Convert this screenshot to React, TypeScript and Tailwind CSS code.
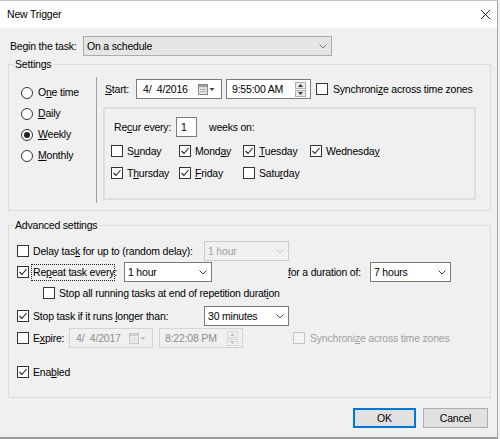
import React from "react";

const FONT = "font-['Liberation_Sans',Arial,sans-serif] text-[10.5px] tracking-[-0.2px] leading-[13px] whitespace-nowrap";

function U({ children }: { children: React.ReactNode }) {
  return <span className="underline underline-offset-[1px] decoration-[1px]">{children}</span>;
}

function Chevron({ color = "#444" }: { color?: string }) {
  return (
    <svg width="8" height="5" viewBox="0 0 8 5" className="shrink-0">
      <polyline points="0.5,0.5 4,4 7.5,0.5" fill="none" stroke={color} strokeWidth="1" />
    </svg>
  );
}

function Checkbox({ checked = false, disabled = false }: { checked?: boolean; disabled?: boolean }) {
  return (
    <span
      className={
        "w-[12px] h-[12px] shrink-0 border flex items-center justify-center " +
        (disabled ? "border-[#c4c4c4] bg-[#f3f3f3]" : "border-[#333333] bg-white")
      }
    >
      {checked && (
        <svg width="10" height="10" viewBox="0 0 10 10">
          <polyline points="1.5,5 4,7.5 8.5,2" fill="none" stroke="#222" strokeWidth="1.1" />
        </svg>
      )}
    </span>
  );
}

function Radio({ checked = false }: { checked?: boolean }) {
  return (
    <span className="w-[12px] h-[12px] shrink-0 rounded-full border border-[#333333] bg-white flex items-center justify-center">
      {checked && <span className="w-[6px] h-[6px] rounded-full bg-[#222]" />}
    </span>
  );
}

function Combo({ text, w, disabled = false }: { text: string; w: string; disabled?: boolean }) {
  return (
    <div
      className={
        "h-[20px] border flex items-center justify-between pl-[3px] pr-[4px] " +
        w +
        (disabled ? " border-[#cccccc] bg-[#f0f0f0] text-[#a0a0a0]" : " border-[#7a7a7a] bg-white")
      }
    >
      <span>{text}</span>
      <Chevron color={disabled ? "#c0c0c0" : "#444"} />
    </div>
  );
}

function CalIcon({ disabled = false }: { disabled?: boolean }) {
  const s = disabled ? "#c8c8c8" : "#8a8a8a";
  const f = disabled ? "#ececec" : "#e4e4e4";
  const h = disabled ? "#d0d0d0" : "#9a9a9a";
  const t = disabled ? "#c0c0c0" : "#444";
  return (
    <svg width="17" height="11" viewBox="0 0 17 11" className="shrink-0">
      <rect x="0.5" y="0.5" width="9" height="10" fill={f} stroke={s} />
      <rect x="1" y="1" width="8" height="2" fill={h} />
      <path d="M2 5.5h6M2 7.5h6" stroke={disabled ? "#dcdcdc" : "#b4b4b4"} />
      <path d="M11.5 4h5l-2.5 3z" fill={t} />
    </svg>
  );
}

function DateBox({ text, w, disabled = false }: { text: string; w: string; disabled?: boolean }) {
  return (
    <div
      className={
        "h-[20px] border flex items-center justify-between pl-[6px] pr-[6px] " +
        w +
        (disabled ? " border-[#d4d4d4] bg-[#f0f0f0] text-[#8c8c8c]" : " border-[#7a7a7a] bg-white")
      }
    >
      <span className="whitespace-pre">{text}</span>
      <CalIcon disabled={disabled} />
    </div>
  );
}

function Spin({ disabled = false }: { disabled?: boolean }) {
  const b = disabled ? "border-[#d8d8d8] bg-[#f0f0f0]" : "border-[#adadad] bg-[#e8e8e8]";
  const t = disabled ? "#c0c0c0" : "#333";
  return (
    <div className="flex flex-col gap-[1px] shrink-0">
      <span className={"w-[11px] h-[7px] border flex items-center justify-center " + b}>
        <svg width="5" height="3" viewBox="0 0 5 3">
          <path d="M0 3h5L2.5 0z" fill={t} />
        </svg>
      </span>
      <span className={"w-[11px] h-[7px] border flex items-center justify-center " + b}>
        <svg width="5" height="3" viewBox="0 0 5 3">
          <path d="M0 0h5L2.5 3z" fill={t} />
        </svg>
      </span>
    </div>
  );
}

function TimeBox({ text, w, disabled = false }: { text: string; w: string; disabled?: boolean }) {
  return (
    <div
      className={
        "h-[20px] border flex items-center justify-between pl-[5px] pr-[4px] " +
        w +
        (disabled ? " border-[#d4d4d4] bg-[#f0f0f0] text-[#8c8c8c]" : " border-[#7a7a7a] bg-white")
      }
    >
      <span>{text}</span>
      <Spin disabled={disabled} />
    </div>
  );
}

function GroupBox({
  label,
  className,
  children,
}: {
  label: string;
  className: string;
  children: React.ReactNode;
}) {
  return (
    <div className={"relative border border-[#dcdcdc] " + className}>
      <span className="absolute -top-[7px] left-[5px] px-[1px] bg-[#f0f0f0] leading-[13px]">{label}</span>
      {children}
    </div>
  );
}

function DayCheck({ w, checked, children }: { w: string; checked?: boolean; children: React.ReactNode }) {
  return (
    <div className={"flex items-center " + w}>
      <Checkbox checked={checked} />
      <span className="ml-[4px]">{children}</span>
    </div>
  );
}

export default function App() {
  return (
    <div className={"w-[500px] h-[439px] bg-[#f0f0f0] text-black overflow-hidden " + FONT}>
      <div className="w-[498px] h-[439px] border-t border-r border-b-2 border-t-[#c4c4c4] border-r-[#a8a8a8] border-b-[#9a9a9a] flex flex-col">
        {/* Title bar */}
        <div className="h-[27px] bg-white flex items-center justify-between pl-[7px] pr-[6px] shrink-0">
          <span className="text-[10.5px]">New Trigger</span>
          <svg width="11" height="11" viewBox="0 0 11 11">
            <path d="M1 1L10 10M10 1L1 10" stroke="#1a1a1a" strokeWidth="1" />
          </svg>
        </div>

        {/* Body */}
        <div className="flex flex-col pl-[8px] pt-[8px]">
          {/* Begin the task */}
          <div className="h-[20px] flex items-center">
            <span className="ml-[2px] w-[73px]">Begin the task:</span>
            <div className="h-[20px] w-[249px] border border-[#adadad] bg-[#e5e5e5] flex items-center justify-between pl-[3px] pr-[4px]">
              <span>On a schedule</span>
              <Chevron color="#7a7a7a" />
            </div>
          </div>

          {/* Settings */}
          <GroupBox label="Settings" className="mt-[8px] w-[483px] h-[147px] flex items-start">
            <div className="w-[87px] pt-[17px] pl-[12px] flex flex-col">
              {[
                ["O", "n", "e time", false],
                ["", "D", "aily", false],
                ["", "W", "eekly", true],
                ["", "M", "onthly", false],
              ].map(([pre, u, post, c], i) => (
                <div key={i} className="h-[21px] flex items-center">
                  <Radio checked={c as boolean} />
                  <span className="ml-[5px]">
                    {pre as string}
                    <U>{u as string}</U>
                    {post as string}
                  </span>
                </div>
              ))}
            </div>
            <div className="mt-[12px] h-[126px] w-px bg-[#a0a0a0]" />
            <div className="pl-[6px] pt-[14px] flex flex-col">
              <div className="h-[20px] flex items-center pl-[2px]">
                <span className="w-[31px]">
                  <U>S</U>tart:
                </span>
                <DateBox text="4/  4/2016" w="w-[86px]" />
                <div className="ml-[4px]">
                  <TimeBox text="9:55:00 AM" w="w-[85px]" />
                </div>
                <span className="ml-[5px]">
                  <Checkbox />
                </span>
                <span className="ml-[5px]">
                  Synchroni<U>z</U>e across time zones
                </span>
              </div>

              <div className="mt-[8px] w-[373px] h-[93px] border-2 border-[#dfdfdf] flex flex-col">
                <div className="mt-[8px] h-[20px] flex items-center pl-[9px]">
                  <span className="w-[62px]">
                    Re<U>c</U>ur every:
                  </span>
                  <div className="h-[20px] w-[21px] border border-[#7a7a7a] bg-white flex items-center pl-[4px]">
                    1
                  </div>
                  <span className="ml-[12px]">weeks on:</span>
                </div>
                <div className="mt-[3px] h-[22px] flex items-center pl-[6px]">
                  <DayCheck w="w-[68px]">
                    S<U>u</U>nday
                  </DayCheck>
                  <DayCheck w="w-[64px]" checked>
                    Mond<U>a</U>y
                  </DayCheck>
                  <DayCheck w="w-[67px]" checked>
                    <U>T</U>uesday
                  </DayCheck>
                  <DayCheck w="w-[100px]" checked>
                    Wednesda<U>y</U>
                  </DayCheck>
                </div>
                <div className="h-[22px] flex items-center pl-[6px]">
                  <DayCheck w="w-[68px]" checked>
                    T<U>h</U>ursday
                  </DayCheck>
                  <DayCheck w="w-[64px]" checked>
                    <U>F</U>riday
                  </DayCheck>
                  <DayCheck w="w-[67px]">
                    Satu<U>r</U>day
                  </DayCheck>
                </div>
              </div>
            </div>
          </GroupBox>

          {/* Advanced settings */}
          <GroupBox label="Advanced settings" className="mt-[14px] w-[483px] h-[173px] flex flex-col pl-[8px]">
            <div className="mt-[15px] h-[20px] flex items-center">
              <Checkbox />
              <span className="ml-[4px] w-[171px]">
                Delay tas<U>k</U> for up to (random delay):
              </span>
              <Combo text="1 hour" w="w-[85px]" disabled />
            </div>

            <div className="mt-[1px] h-[20px] flex items-center">
              <Checkbox checked />
              <span className="ml-[2px] w-[84px] h-[17px] border border-dotted border-[#222] block pl-[1px] leading-[15px]">
                Re<U>p</U>eat task every:
              </span>
              <div className="ml-[9px]">
                <Combo text="1 hour" w="w-[88px]" />
              </div>
              <span className="ml-[76px] w-[82px]">
                <U>f</U>or a duration of:
              </span>
              <Combo text="7 hours" w="w-[81px]" />
            </div>

            <div className="mt-[1px] h-[20px] flex items-center pl-[26px]">
              <Checkbox />
              <span className="ml-[4px]">
                Stop all running tasks at end of repetition durat<U>i</U>on
              </span>
            </div>

            <div className="mt-[3px] h-[20px] flex items-center">
              <Checkbox checked />
              <span className="ml-[4px] w-[171px]">
                Stop task if it runs <U>l</U>onger than:
              </span>
              <Combo text="30 minutes" w="w-[85px]" />
            </div>

            <div className="mt-[2px] h-[20px] flex items-center">
              <Checkbox />
              <span className="ml-[4px] w-[36px]">
                E<U>x</U>pire:
              </span>
              <DateBox text="4/  4/2017" w="w-[84px]" disabled />
              <div className="ml-[6px]">
                <TimeBox text="8:22:08 PM" w="w-[84px]" disabled />
              </div>
              <span className="ml-[50px]">
                <Checkbox disabled />
              </span>
              <span className="ml-[5px] text-[#a0a0a0]">
                Synchroni<U>z</U>e across time zones
              </span>
            </div>

            <div className="mt-[14px] h-[20px] flex items-center">
              <Checkbox checked />
              <span className="ml-[4px]">
                Ena<U>b</U>led
              </span>
            </div>
          </GroupBox>

          {/* Buttons */}
          <div className="mt-[10px] h-[20px] flex items-center pl-[345px] gap-[7px]">
            <button className="w-[63px] h-[20px] border-2 border-[#0078d7] bg-[#e1e1e1] flex items-center justify-center">
              OK
            </button>
            <button className="w-[65px] h-[20px] border border-[#adadad] bg-[#e1e1e1] flex items-center justify-center">
              Cancel
            </button>
          </div>
        </div>
      </div>
    </div>
  );
}
